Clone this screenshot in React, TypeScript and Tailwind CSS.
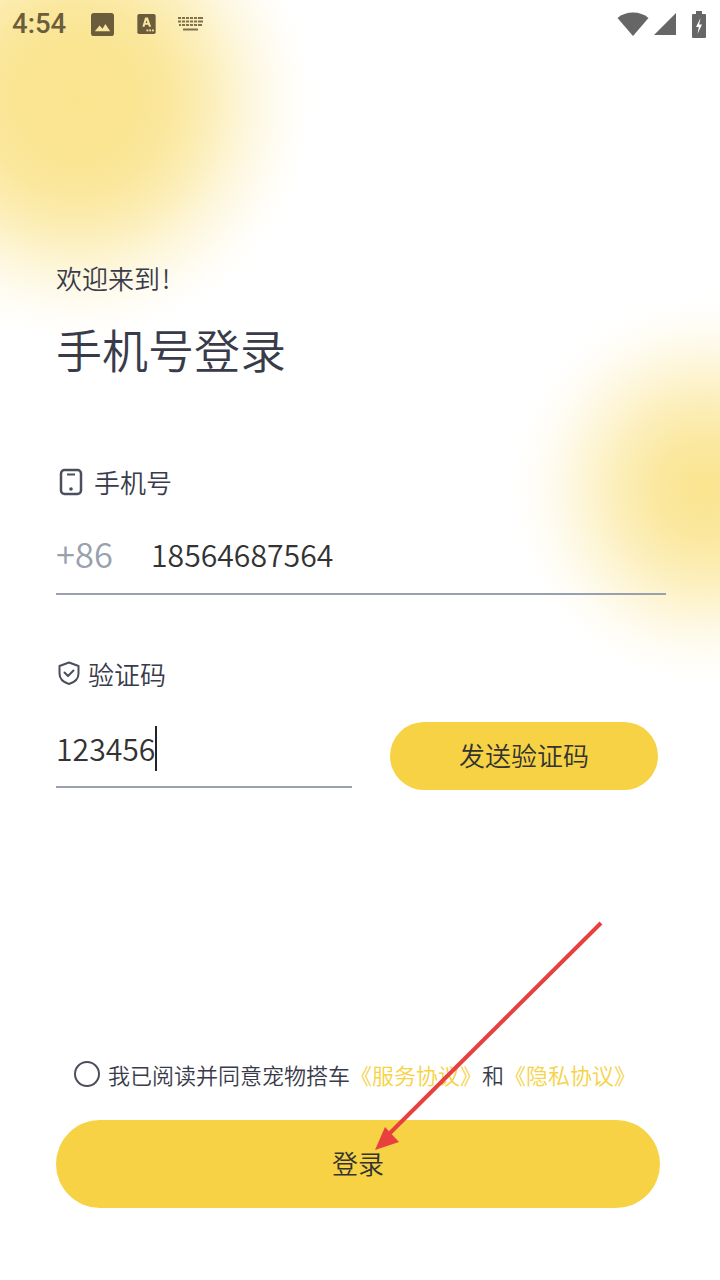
const cjk = "font-['Noto_Sans_CJK_SC','Noto_Sans',sans-serif]";

function StatusBar() {
  return (
    <div className="flex h-[48px] items-center justify-between pl-[12px] pr-[14px] text-[#6b5d3c]">
      <div className="flex items-center">
        <span className="font-['Roboto',sans-serif] text-[27.5px] font-medium leading-none text-[#6b5d3c]">4:54</span>
        <svg className="ml-[25px]" width="23" height="23" viewBox="0 0 24 24" fill="currentColor">
          <path d="M3 0h18a3 3 0 0 1 3 3v18a3 3 0 0 1-3 3H3a3 3 0 0 1-3-3V3a3 3 0 0 1 3-3z" />
          <path fill="#f9e59b" d="M4 19l5-6 3 3.500 3-5 5 7.500z" />
        </svg>
        <svg className="ml-[23px]" width="19" height="22" viewBox="0 0 20 24" fill="currentColor">
          <rect x="0" y="1" width="20" height="22" rx="2" />
          <path fill="#f9e59b" d="M8.500 5h3l3.500 10h-2.400l-.7-2.200H8.500L7.800 15H5.500zM9.100 11h1.800L10 8z" />
          <rect fill="#f9e59b" x="10" y="18" width="2" height="2" />
          <rect fill="#f9e59b" x="13" y="18" width="2" height="2" />
          <rect fill="#f9e59b" x="16" y="18" width="2" height="2" />
        </svg>
        <svg className="ml-[22px]" width="25" height="14" viewBox="0 0 25 14" fill="currentColor" opacity="0.85">
          <path d="M0 0h25v2H0zM0 3.500h25v2H0zM1 7h23v2H1zM5 11.500h15v2H5z" />
          <path fill="#fbe7a5" d="M3 0h1v9H3zM7 0h1v9H7zM11 0h1v9h-1zM15 0h1v9h-1zM19 0h1v9h-1z" />
        </svg>
      </div>
      <div className="flex items-center text-[#666666]">
        <svg width="32" height="26" viewBox="0 0 32 26" fill="currentColor">
          <path d="M0.500 7C4.500 3.400 10 1.500 16 1.500S27.500 3.400 31.500 7L16 25z" />
        </svg>
        <svg className="ml-[5px]" width="22" height="24" viewBox="0 0 22 24" fill="currentColor">
          <path d="M22 1v22H0z" />
        </svg>
        <svg className="ml-[16px]" width="14" height="27" viewBox="0 0 14 27" fill="currentColor">
          <path fillRule="evenodd" d="M4 0h6v3h3a1 1 0 0 1 1 1V26a1 1 0 0 1-1 1H1a1 1 0 0 1-1-1V4a1 1 0 0 1 1-1h3zM8.500 7L4 16h2.800L5.500 23l4.500-9.500H7.200z" />
        </svg>
      </div>
    </div>
  );
}

export default function App() {
  return (
    <div className={`relative h-[1280px] w-[720px] overflow-hidden bg-white ${cjk} font-[350] text-[#393b4b]`}>
      {/* soft yellow blobs behind the form */}
      <div className="absolute left-[-165px] top-[-140px] h-[480px] w-[480px] rounded-full bg-[radial-gradient(closest-side,#fae48f_0%,#fae48ff5_25%,#fae48fe0_38%,#fae48fb8_50%,#fae48f80_62%,#fae48f4a_73%,#fae48f22_84%,#fae48f0a_93%,#fae48f00_100%)]" />
      <div className="absolute left-[510px] top-[295px] h-[390px] w-[390px] rounded-full bg-[radial-gradient(closest-side,#fae48f_0%,#fae48fd9_25%,#fae48fa6_42%,#fae48f70_57%,#fae48f40_70%,#fae48f1c_82%,#fae48f08_93%,#fae48f00_100%)]" />

      <div className="relative flex h-full flex-col">
        <StatusBar />

        <div className="flex flex-1 flex-col pl-[56px]">
          <p className="mt-[213px] text-[26px] leading-[34px]">
            欢迎来到<span className="ml-[2px]">!</span>
          </p>
          <h1 className="mt-[19px] text-[46px] font-[350] leading-[68px]">手机号登录</h1>

          <div className="mt-[81px] flex h-[36px] items-center">
            <svg className="ml-[3px] mt-[2px]" width="24" height="28" viewBox="0 0 24 28" fill="none" stroke="#4b4f5c" strokeWidth="2.500">
              <rect x="2" y="2" width="20" height="24" rx="3.500" />
              <path d="M8 6.500h8" strokeWidth="2" />
              <circle cx="12" cy="21" r="1.800" fill="#4b4f5c" stroke="none" />
            </svg>
            <span className="ml-[11px] text-[26px]">手机号</span>
          </div>
          <div className="mt-[16px] flex h-[80px] w-[610px] items-center border-b-2 border-[#98a1ad] text-[30.2px] text-[#333333]">
            <span className="w-[95px] text-[34.5px] text-[#98a1ad]">+86</span>
            <span className="pt-[2px]">18564687564</span>
          </div>

          <div className="mt-[60px] flex h-[36px] items-center">
            <svg className="ml-[1px]" width="24" height="26" viewBox="0 0 24 26" fill="none" stroke="#4b4f5c" strokeWidth="2" strokeLinecap="round" strokeLinejoin="round">
              <path d="M12 2.500l9.500 3.500v7.500c0 5.500-4.500 9-9.500 10.500-5-1.500-9.500-5-9.500-10.500V6z" />
              <path d="M7.500 12.500l3.500 3.500 5.500-5.500" />
            </svg>
            <span className="ml-[7px] text-[26px]">验证码</span>
          </div>

          <div className="mt-[20px] flex items-start">
            <div className="flex h-[77px] w-[296px] items-center border-b-2 border-[#98a1ad] text-[30.2px] text-[#333333]">
              <span>123456</span>
              <span className="h-[45px] w-[2px] bg-[#22232b]" />
            </div>
            <button className="ml-[38px] mt-[11px] h-[68px] w-[268px] rounded-full bg-[#f6d244] pb-[3px] text-[26px] font-[350] text-[#333333]">发送验证码</button>
          </div>

          <div className="mt-[268px] flex h-[32px] items-center pl-[18px] text-[22px]">
            <span className="h-[26px] w-[26px] rounded-full border-2 border-[#4b4f5c]" />
            <span className="ml-[8px]">我已阅读并同意宠物搭车</span>
            <span className="text-[#f6d244]">《服务协议》</span>
            <span>和</span>
            <span className="text-[#f6d244]">《隐私协议》</span>
          </div>

          <button className="mt-[30px] h-[88px] w-[604px] rounded-full bg-[#f6d244] pb-[3px] text-[26px] font-[350] text-[#333333]">登录</button>
        </div>
      </div>

      {/* annotation arrow drawn over the screen */}
      <svg className="absolute left-[360px] top-[910px]" width="250" height="250" viewBox="0 0 250 250">
        <path d="M241 13L28 225" stroke="#e83f3f" strokeWidth="4" />
        <path d="M15 240L25 217L39 232z" fill="#e83f3f" />
      </svg>
    </div>
  );
}
